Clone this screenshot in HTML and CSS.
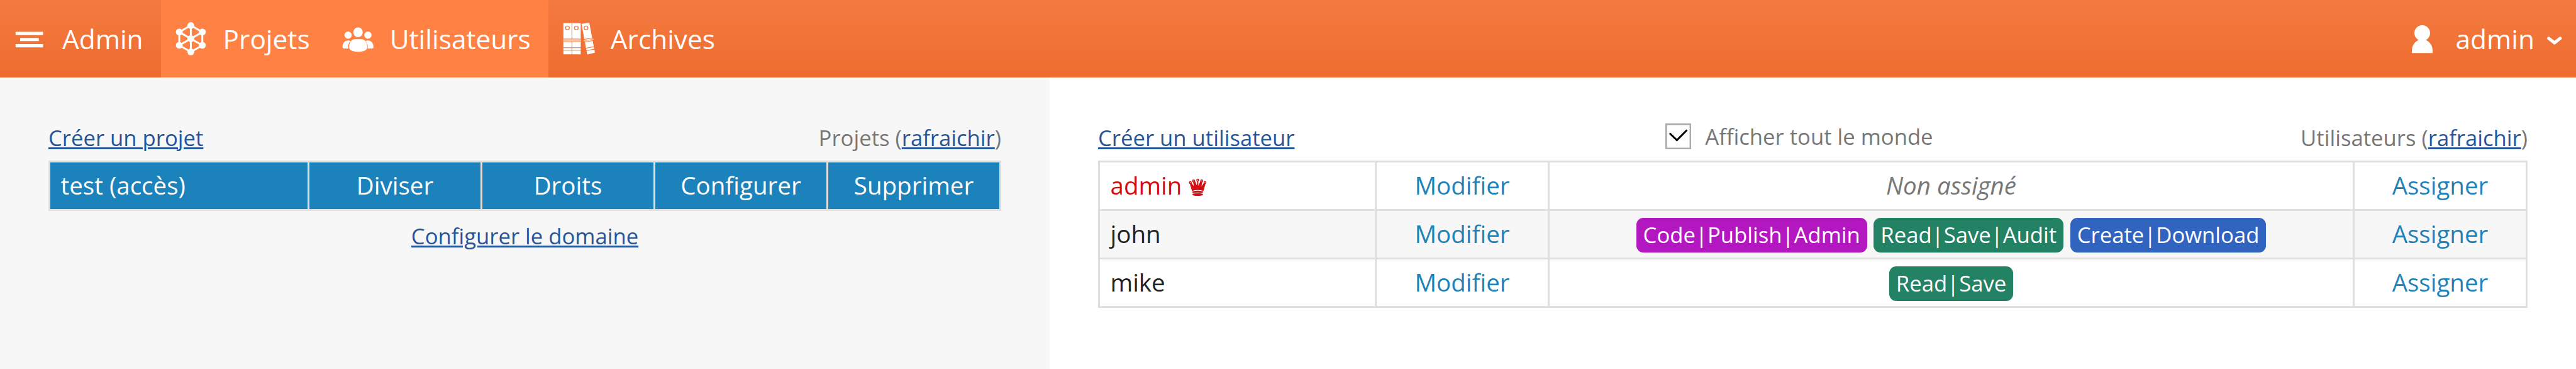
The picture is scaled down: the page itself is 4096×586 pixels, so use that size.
FILE: index.html
```
<!DOCTYPE html>
<html lang="fr">
<head>
<meta charset="utf-8">
<title>Admin</title>
<link rel="stylesheet" href="styles.css">
</head>
<body>
<header class="topbar">
  <nav class="nav">
    <a class="nav-item">
      <svg class="icon" viewBox="21.8 37.1 60 60"><path d="M27 55h47.700v5.700H27zM35 65.700h32.300v5.600H35zM27 76.300h47.700v5.700H27z"/></svg>
      <span>Admin</span>
    </a>
    <a class="nav-item active">
      <svg class="icon" viewBox="300.1 37.1 60 60">
        <path class="line" d="M330 44l20 11.500v23L330 90l-20-11.500v-23zM330 44v46M310 55.500l40 23M350 55.500l-40 23"/>
        <circle cx="330" cy="44.200" r="5.900"/><circle cx="350" cy="55.500" r="5.900"/><circle cx="350" cy="78.500" r="5.900"/><circle cx="330" cy="89.800" r="5.900"/><circle cx="310" cy="78.500" r="5.900"/><circle cx="310" cy="55.500" r="5.900"/><circle cx="330" cy="67" r="5.900"/>
      </svg>
      <span>Projets</span>
    </a>
    <a class="nav-item active">
      <svg class="icon" viewBox="588.6 37.1 60 60">
        <circle cx="602.200" cy="60.800" r="6.300"/><circle cx="636.600" cy="60.800" r="6.300"/>
        <path d="M603.800 70.300c-7-.8-11.300 4.700-11.300 11.300 0 1.800 1 2.400 3 2.400h7.200c-.8-5 .2-9.500 3.600-13zM635 70.300c7-.8 11.300 4.700 11.300 11.300 0 1.800-1 2.400-3 2.400h-7.200c.8-5-.2-9.500-3.600-13z"/>
        <ellipse cx="619.500" cy="56" rx="8.200" ry="8.500"/>
        <path d="M614 68h11.500c6.500 0 10 6.500 10 13 0 6.800-7 8.700-15.800 8.700s-15.700-1.900-15.700-8.700c0-6.500 3.500-13 10-13z"/>
      </svg>
      <span>Utilisateurs</span>
    </a>
    <a class="nav-item">
      <svg class="icon" viewBox="971.1 37.1 60 60">
        <path d="M975.300 40h14.200v54h-14.200zM990.700 40h14.600v54h-14.600z"/>
        <path d="M1006.800 41.300l13.400-1.800 9.800 52-13.500 3z"/>
        <path class="stripe" d="M975 67.600h31M975 72.200h31M975 82.700h31M975 87h31M1010.500 68.500l17-3M1011 73.200l17-3M1013 83.700l17-3.300M1013.500 88.200l18-3.600"/>
        <path class="tint" d="M975 69.900h31M1010.500 70.900l17-3"/>
        <circle class="ring" cx="982.300" cy="48.400" r="3.300"/><circle class="ring" cx="997.700" cy="48.400" r="3.300"/><circle class="ring" cx="1014.500" cy="48.400" r="3.300"/>
      </svg>
      <span>Archives</span>
    </a>
  </nav>
  <div class="account">
    <svg class="person" viewBox="4183 44 36 48.300"><circle cx="4201" cy="57.600" r="13.600"/><path d="M4183 92.300v-4c0-9 5-16 12.500-19h11c7.500 3 12.500 10 12.500 19v4z"/></svg>
    <span>admin</span>
    <svg class="chevron" viewBox="4417 62 26 16"><path d="M4419.800 66.200l9.900 7.800 9.900-7.800"/></svg>
  </div>
</header>
<main class="main">
  <section class="panel projects">
    <div class="toolbar">
      <a class="link">Créer un projet</a>
      <span>Projets (<a class="link">rafraichir</a>)</span>
    </div>
    <div class="table project-table">
      <div class="cell name">test (accès)</div>
      <div class="cell">Diviser</div>
      <div class="cell">Droits</div>
      <div class="cell">Configurer</div>
      <div class="cell">Supprimer</div>
    </div>
    <div class="domain"><a class="link">Configurer le domaine</a></div>
  </section>
  <section class="panel users">
    <div class="toolbar">
      <a class="link">Créer un utilisateur</a>
      <label class="show-all">
        <svg class="checkbox" viewBox="0 0 45 45"><rect x="1.500" y="1.500" width="42" height="42"/><path d="M7.500 17l12.500 12L37.500 11.500"/></svg>
        <span>Afficher tout le monde</span>
      </label>
      <span>Utilisateurs (<a class="link">rafraichir</a>)</span>
    </div>
    <div class="table user-table">
      <div class="cell name super"><span>admin <svg class="crown" viewBox="2060.8 308 34 32"><path d="M2067.600 330l-4-14 2.400-.8 5 7-1.800-10 3-.8 4.200 9.600.4-11h1.600l.4 11 4.200-9.600 3 .8-1.800 10 5-7 2.400.8-4 14q-10-3.200-20 0zM2068 331.200q9.600-3 19.200 0l-1.300 2.600q-8.400-1.900-16.600 0zM2069 335q8.600-2 17.200 0l.6 1.600q-.2 2-9.200 2t-9.200-2z"/><g class="bead"><circle cx="2064.800" cy="315.700" r="1.700"/><circle cx="2070.500" cy="312.700" r="1.700"/><circle cx="2077.600" cy="311.400" r="1.700"/><circle cx="2084.600" cy="312.700" r="1.700"/><circle cx="2090.300" cy="315.700" r="1.700"/></g></svg></span></div>
      <div class="cell action">Modifier</div>
      <div class="cell none">Non assigné</div>
      <div class="cell action">Assigner</div>

      <div class="cell name alt">john</div>
      <div class="cell action alt">Modifier</div>
      <div class="cell badges alt"><span class="badge purple">Code|Publish|Admin</span><span class="badge green">Read|Save|Audit</span><span class="badge blue">Create|Download</span></div>
      <div class="cell action alt">Assigner</div>

      <div class="cell name">mike</div>
      <div class="cell action">Modifier</div>
      <div class="cell badges"><span class="badge green">Read|Save</span></div>
      <div class="cell action">Assigner</div>
    </div>
  </section>
</main>
</body>
</html>
```
FILE: styles.css
```
* { box-sizing: border-box; }

body {
  margin: 0;
  height: 586px;
  display: flex;
  flex-direction: column;
  overflow: hidden;
  background: #fff;
  color: #222;
  font-family: "Open Sans", "Noto Sans", sans-serif;
  font-size: 38.51px;
}

svg { display: block; flex: none; }

/* Top bar */
.topbar {
  height: 123px;
  flex: none;
  display: flex;
  justify-content: space-between;
  background: linear-gradient(#f47a40, #ee6c2f);
  color: #fff;
  font-size: 42.36px;
  white-space: nowrap;
}
.nav { display: flex; }
.nav-item {
  display: flex;
  align-items: center;
  gap: 24px;
  padding: 0 28px 0 20px;
}
.nav-item.active { background: #ff8244; }
.icon { width: 55px; height: 55px; fill: #fff; }
.icon .line { fill: none; stroke: #fff; stroke-width: 3.2; }
.icon .stripe { fill: none; stroke: #f07437; stroke-width: 1.1; }
.icon .tint { fill: none; stroke: #f9c3a8; stroke-width: 2.4; }
.icon .ring { fill: #fff; stroke: #f07b42; stroke-width: 1.5; }

.account { display: flex; align-items: center; padding-right: 22.500px; }
.person { width: 33px; height: 44.300px; margin: 2px 36.500px 0 0; fill: #fff; }
.chevron { width: 24px; height: 14.700px; margin: 5px 0 0 19.600px; }
.chevron path {
  fill: none;
  stroke: #fff;
  stroke-width: 5.4;
  stroke-linecap: round;
  stroke-linejoin: round;
}

/* Panels */
.main { flex: 1; display: flex; }
.panel { padding: 72px 77px 0; }
.projects { width: 1669px; background: #f7f7f7; }
.users { flex: 1; }

.toolbar {
  height: 60px;
  display: flex;
  justify-content: space-between;
  padding-top: 4px;
  color: #777;
  font-size: 34.66px;
  line-height: 40px;
  white-space: nowrap;
}
.link {
  color: #26559b;
  text-decoration: underline;
  text-decoration-thickness: 3px;
  text-underline-offset: 2px;
}
.show-all { display: flex; gap: 22px; margin: -2px 0 0 5px; }
.checkbox { width: 41.300px; height: 41.300px; margin-top: -1px; }
.checkbox rect { fill: #fff; stroke: #acacac; stroke-width: 3; }
.checkbox path { fill: none; stroke: #000; stroke-width: 3.2; }

.table {
  display: grid;
  gap: 3px;
  padding: 3px;
  background: #dfdfdf;
  grid-auto-rows: 74px;
}
.project-table { grid-template-columns: 409px repeat(4, 272px); }
.user-table { grid-template-columns: 437px 272px 1277px 272px; }
.cell {
  display: flex;
  align-items: center;
  justify-content: center;
  padding-bottom: 2px;
  background: #fff;
  white-space: nowrap;
}
.cell.name { justify-content: flex-start; padding-left: 16.500px; }
.project-table .cell { background: #1b82bb; color: #fff; }
.cell.alt { background: #f7f7f7; }
.cell.action { color: #1f82b8; }
.cell.super { color: #d60d10; }
.cell.none { color: #777; font-style: italic; }

.crown { display: inline-block; width: 31.200px; height: 29.300px; vertical-align: -3px; fill: #d01012; }
.crown .bead { fill: #fff; stroke: #d01012; stroke-width: 1.6; }

.badges { gap: 10.500px; padding: 2px 0 0; }
.badge {
  height: 55px;
  padding: 0 11px;
  border-radius: 11px;
  color: #fff;
  font-size: 34.66px;
  line-height: 53px;
}
.purple { background: #b317bf; }
.green { background: #248264; }
.blue { background: #3164bf; }

.domain {
  margin-top: 20px;
  text-align: center;
  font-size: 34.66px;
  line-height: 40px;
}
```
